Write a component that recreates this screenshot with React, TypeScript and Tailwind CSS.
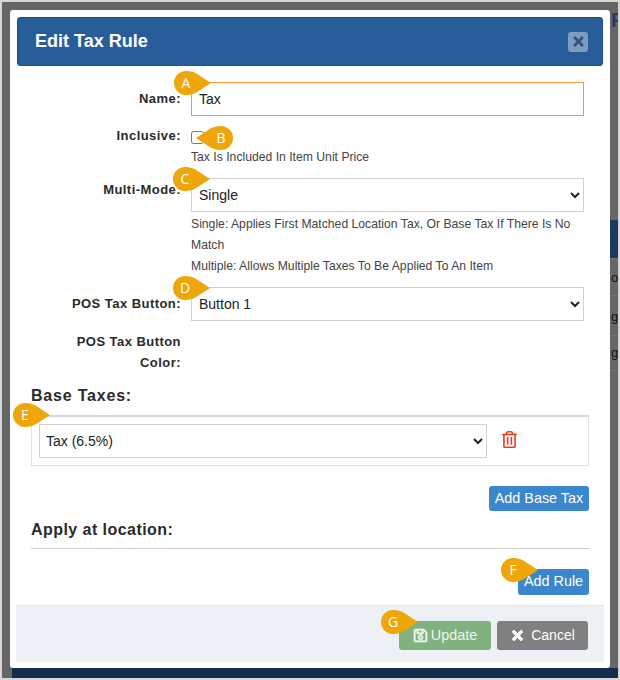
import React from "react";
import { FaRegSave, FaRegTrashAlt, FaTimes } from "react-icons/fa";

// numbered pin that sits over the form
function Callout({ letter, className, flip }: { letter: string; className: string; flip?: boolean }) {
    return (
        <div className={"absolute w-[37px] h-[24px] " + className}>
            <svg viewBox="0 0 37 24" className={flip ? "w-full h-full -scale-x-100" : "w-full h-full"}>
                <path d="M12 0C17 0 21 1.500 24 3.500L37 12L24 20.500C21 22.500 17 24 12 24A12 12 0 0 1 12 0Z" fill="#eea60a" />
            </svg>
            <span className={flip ? "absolute top-0 right-0 w-[24px] h-[24px] text-center leading-[24px] text-white text-[14px] font-['Open_Sans',sans-serif]" : "absolute top-0 left-0 w-[24px] h-[24px] text-center leading-[24px] text-white text-[14px] font-['Open_Sans',sans-serif]"}>
                {letter}
            </span>
        </div>
    );
}

function Label({ children }: { children: React.ReactNode }) {
    return <div className="w-[150px] shrink-0 text-right text-[13px] font-bold leading-[21px] tracking-[0.45px] text-[#2a2a2a]">{children}</div>;
}

const selectClasses = "w-full h-[34px] bg-white border border-[#d2d2d2] pl-[3px] text-[14px] text-[#222]";

export default function App() {
    return (
        <div className="w-[620px] h-[680px] overflow-hidden bg-[#d6d6d6] p-[2px] font-['Liberation_Sans',Arial,sans-serif]">
            <div className="relative w-[616px] h-[676px] overflow-hidden bg-[#666666] pt-[8px] pl-[8px]">
                {/* page behind the dialog, only its right edge shows */}
                <div className="absolute left-[609px] top-[6px] text-[20px] font-bold leading-[24px] text-[#1c3f63]">F</div>
                <div className="absolute left-[608px] top-[218px] w-[8px] h-[38px] bg-[#1c3a5e]"></div>
                <div className="absolute left-[608px] top-[256px] w-[8px] border-t border-[#777]"></div>
                <div className="absolute left-[609px] top-[268px] text-[13px] leading-[16px] text-[#111]">o</div>
                <div className="absolute left-[608px] top-[293px] w-[8px] border-t border-[#777]"></div>
                <div className="absolute left-[609px] top-[307px] text-[13px] leading-[16px] text-[#111]">g</div>
                <div className="absolute left-[608px] top-[333px] w-[8px] border-t border-[#777]"></div>
                <div className="absolute left-[609px] top-[343px] text-[13px] leading-[16px] text-[#111]">g</div>
                <div className="absolute left-[608px] top-[368px] w-[8px] border-t border-[#777]"></div>

                <div className="relative w-[600px] h-[658px] bg-white rounded-[3px] pt-[7px] px-[6px] pb-[6px] flex flex-col">
                    <div className="h-[49px] mx-px shrink-0 flex items-center justify-between bg-[#295d99] border border-[#1e4f8a] rounded-[3px] pl-[17px] pr-[14px]">
                        <h1 className="text-[18px] font-bold text-white">Edit Tax Rule</h1>
                        <button className="w-[20px] h-[20px] flex items-center justify-center rounded-[3px] bg-[#7d9cc3] text-[#34527d]">
                            <FaTimes className="w-[15px] h-[15px]" />
                        </button>
                    </div>

                    <div className="flex-1 px-[15px] pt-[16px]">
                        <div className="flex gap-[10px]">
                            <div className="pt-[6px]"><Label>Name:</Label></div>
                            <input defaultValue="Tax" className="w-[393px] h-[34px] border border-[#f0983c] px-[7px] text-[14px] text-[#222] outline-none" />
                        </div>

                        <div className="flex gap-[10px] mt-[9px]">
                            <Label>Inclusive:</Label>
                            <div className="w-[393px]">
                                <div className="h-[21px] pt-[6px]">
                                    <input type="checkbox" className="block w-[13px] h-[13px]" />
                                </div>
                                <p className="mt-[1px] text-[12.200px] leading-[21px] text-[#444]">Tax Is Included In Item Unit Price</p>
                            </div>
                        </div>

                        <div className="flex gap-[10px] mt-[10px]">
                            <div className="pt-px"><Label>Multi-Mode:</Label></div>
                            <div className="w-[393px]">
                                <select className={selectClasses} defaultValue="Single">
                                    <option>Single</option>
                                    <option>Multiple</option>
                                </select>
                                <p className="mt-[1.500px] text-[12.200px] leading-[21px] text-[#444]">Single: Applies First Matched Location Tax, Or Base Tax If There Is No Match</p>
                                <p className="text-[12.200px] leading-[21px] text-[#444]">Multiple: Allows Multiple Taxes To Be Applied To An Item</p>
                            </div>
                        </div>

                        <div className="flex gap-[10px] mt-[10.500px]">
                            <div className="pt-[6px]"><Label>POS Tax Button:</Label></div>
                            <div className="w-[393px]">
                                <select className={selectClasses} defaultValue="Button 1">
                                    <option>Button 1</option>
                                    <option>Button 2</option>
                                </select>
                            </div>
                        </div>

                        <div className="flex gap-[10px] mt-[10px]">
                            <Label>POS Tax Button<br />Color:</Label>
                        </div>

                        <h2 className="mt-[13px] text-[16px] font-bold leading-[20px] tracking-[0.8px] text-[#2a2a2a]">Base Taxes:</h2>
                        <div className="mt-[9px] h-[51px] border border-[#e2e2e2] border-t-2 border-t-[#d6d6d6] pl-[7px] pt-[7px] flex">
                            <select className="w-[448px] h-[34px] bg-white border border-[#d2d2d2] pl-[2px] text-[14px] text-[#222]" defaultValue="Tax (6.5%)">
                                <option>Tax (6.5%)</option>
                            </select>
                            <FaRegTrashAlt className="ml-[15px] mt-[7px] w-[15px] h-[17px] text-[#ea3a20]" />
                        </div>

                        <div className="flex justify-end mt-[20px]">
                            <button className="h-[25px] w-[100px] bg-[#3a87cd] rounded-[3px] text-[14.400px] text-white">Add Base Tax</button>
                        </div>

                        <h2 className="mt-[9px] text-[16px] font-bold leading-[20px] tracking-[0.45px] text-[#2a2a2a]">Apply at location:</h2>
                        <div className="mt-[8px] border-t border-[#cfcfcf]"></div>

                        <div className="flex justify-end mt-[20px]">
                            <button className="h-[26px] w-[71px] bg-[#3a87cd] rounded-[3px] text-[14.400px] text-white">Add Rule</button>
                        </div>
                    </div>

                    <div className="h-[57px] shrink-0 bg-[#edf1f6] border-t border-[#e2e7ed] flex justify-end gap-[6px] pt-[15px] pr-[16px]">
                        <button className="w-[92px] h-[29px] flex items-center justify-center gap-[3px] bg-[#7fb27f] rounded-[3px] text-[14.400px] text-[#eef5ee]">
                            <FaRegSave className="w-[15px] h-[15px] stroke-[20px]" /> Update
                        </button>
                        <button className="w-[91px] h-[29px] flex items-center justify-center gap-[6px] bg-[#808080] rounded-[3px] text-[14px] text-white">
                            <FaTimes className="w-[15px] h-[15px] stroke-[30px]" /> Cancel
                        </button>
                    </div>

                    <Callout letter="A" className="left-[164px] top-[61px]" />
                    <Callout letter="B" className="left-[186px] top-[116px]" flip />
                    <Callout letter="C" className="left-[163px] top-[157px]" />
                    <Callout letter="D" className="left-[163px] top-[266px]" />
                    <Callout letter="E" className="left-[3px] top-[393px]" />
                    <Callout letter="F" className="left-[491px] top-[548px]" />
                    <Callout letter="G" className="left-[371px] top-[600px]" />
                </div>

                <div className="ml-[2px] w-[606px] h-[10px] bg-[#142d4e]"></div>
            </div>
        </div>
    );
}
